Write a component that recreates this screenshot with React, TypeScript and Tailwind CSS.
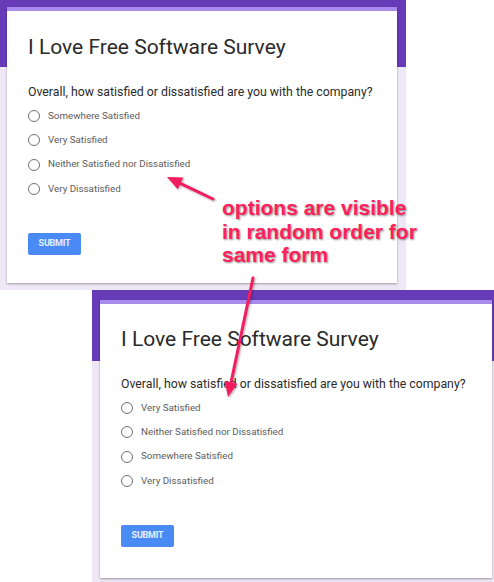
import React from "react"

const options1 = ["Somewhere Satisfied", "Very Satisfied", "Neither Satisfied nor Dissatisfied", "Very Dissatisfied"]
const options2 = ["Very Satisfied", "Neither Satisfied nor Dissatisfied", "Somewhere Satisfied", "Very Dissatisfied"]

function Radio({ label }: { label: string }) {
  return (
    <div className="flex h-[24.3px] items-center">
      <span className="h-[12px] w-[12px] shrink-0 rounded-full border-[1.5px] border-[#6e6e6e]" />
      <span className="ml-[8px] text-[9.8px] text-[#5c5c5c]">{label}</span>
    </div>
  )
}

function FormCard({ options, className, titleClass }: { options: string[]; className: string; titleClass: string }) {
  return (
    <div
      className={`border-t-4 border-[#a88bea] bg-white px-[21px] shadow-[0_1px_2px_rgba(0,0,0,0.35)] font-['Roboto',sans-serif] ${className}`}
    >
      <h1 className={`text-[21px] leading-[24px] text-[#2a2a2a] ${titleClass}`}>I Love Free Software Survey</h1>
      <p className="mt-[25px] text-[12.3px] leading-[16px] text-[#2a2a2a]">
        Overall, how satisfied or dissatisfied are you with the company?
      </p>
      <div className="mt-[4px] flex flex-col">
        {options.map((o) => (
          <Radio key={o} label={o} />
        ))}
      </div>
      <button className="mt-[32px] flex h-[22px] w-[53px] items-center justify-center rounded-[2px] bg-[#4a8af4] text-[9px] font-bold tracking-tight text-[#e8f0fe]">
        SUBMIT
      </button>
    </div>
  )
}

function Arrow({ tail, tip }: { tail: [number, number]; tip: [number, number] }) {
  const dx = tip[0] - tail[0]
  const dy = tip[1] - tail[1]
  const len = Math.hypot(dx, dy)
  const ux = dx / len
  const uy = dy / len
  // head size
  const L = 15
  const w = 6.5
  const bx = tip[0] - ux * L
  const by = tip[1] - uy * L
  const head = `${tip[0]},${tip[1]} ${bx - uy * w},${by + ux * w} ${bx + uy * w},${by - ux * w}`
  return (
    <g>
      <line x1={tail[0]} y1={tail[1]} x2={bx + ux * 2} y2={by + uy * 2} stroke="#f21f5f" strokeWidth={3} strokeLinecap="round" />
      <polygon points={head} fill="#f21f5f" />
    </g>
  )
}

export default function App() {
  return (
    <div className="relative h-[582px] w-[494px] overflow-hidden bg-white">
      <div className="h-[290px] w-[406px] bg-[linear-gradient(to_bottom,#673ab7_67px,#ede7f6_67px)] pl-[7px] pr-[9px] pt-[7px]">
        <FormCard options={options1} className="h-[276px]" titleClass="pt-[24px]" />
      </div>
      <div className="ml-[92px] h-[292px] w-[402px] bg-[linear-gradient(to_bottom,#673ab7_71px,#ede7f6_71px)] pl-[8px] pr-[2px] pt-[10px]">
        <FormCard options={options2} className="h-[278px]" titleClass="pt-[23px]" />
      </div>

      {/* annotation */}
      <div className="absolute left-[222px] top-[196px] font-['Liberation_Sans',Arial,sans-serif] text-[21px] font-bold leading-[23.5px] text-[#ff1f5c] [text-shadow:1px_1px_2px_rgba(0,0,0,0.45)]">
        <div>options are visible</div>
        <div>in random order for</div>
        <div>same form</div>
      </div>

      <svg className="pointer-events-none absolute left-0 top-0" width={494} height={582} viewBox="0 0 494 582">
        <defs>
          <filter id="sh" x="-20%" y="-20%" width="140%" height="140%">
            <feDropShadow dx="1" dy="1" stdDeviation="1" floodColor="#000" floodOpacity="0.35" />
          </filter>
        </defs>
        <g filter="url(#sh)">
          <Arrow tail={[213, 199]} tip={[167, 177]} />
          <Arrow tail={[253, 278]} tip={[228, 397]} />
        </g>
      </svg>
    </div>
  )
}
